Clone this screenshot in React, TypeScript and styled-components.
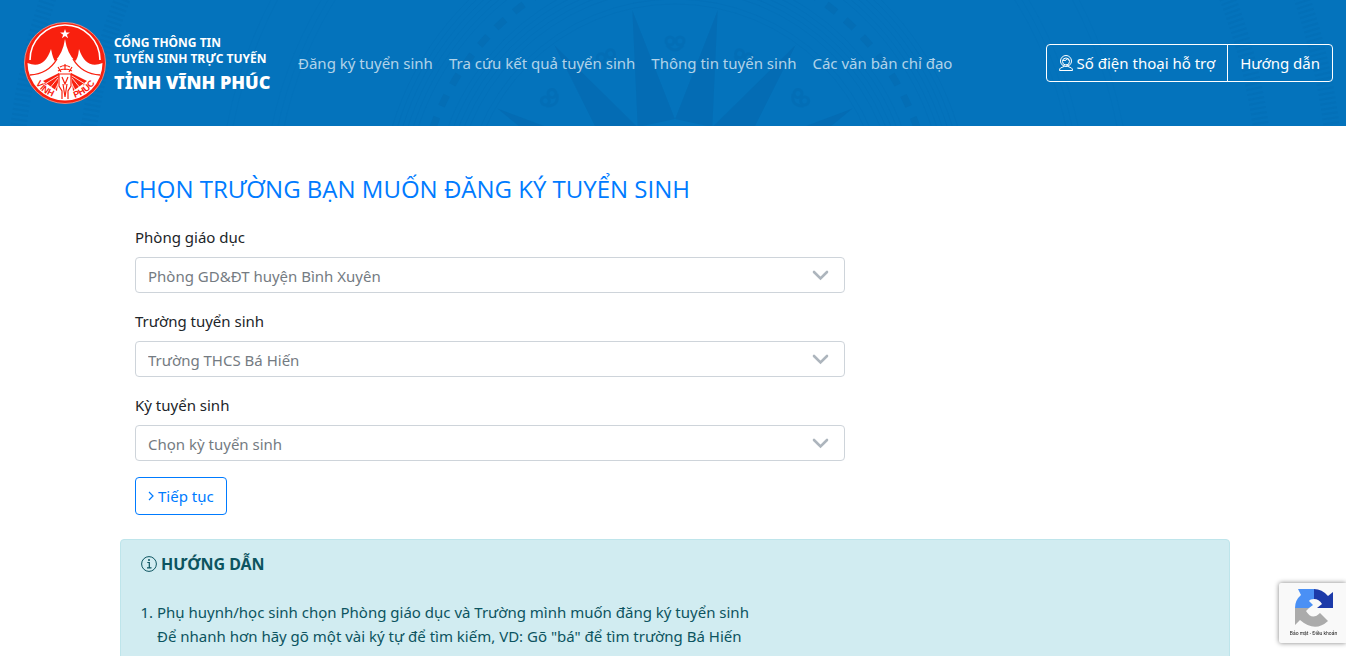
import React from "react";
import styled, { createGlobalStyle } from "styled-components";

const sans = `"Noto Sans", "Open Sans", sans-serif`;

const Global = createGlobalStyle`
  *, *::before, *::after { box-sizing: border-box; }
  body { margin: 0; background: #fff; color: #212529; font: 400 15px/24px ${sans}; }
`;

const Header = styled.header`
  position: relative;
  display: flex;
  align-items: center;
  height: 126px;
  padding: 0 13px 0 24px;
  background: #0473bc;
  overflow: hidden;
`;

const DrumPattern = styled.svg`
  position: absolute;
  inset: 0;
  width: 100%;
  height: 100%;
`;

const Brand = styled.a`
  position: relative;
  display: flex;
  align-items: center;
  gap: 8px;
  width: 266px;
  color: #fff;
  text-decoration: none;
  white-space: nowrap;
`;

const BrandText = styled.span`
  display: flex;
  flex-direction: column;
  padding-top: 6px;
  font-size: 12px;
  line-height: 16px;
  font-weight: 700;
`;

const Province = styled.strong`
  font-size: 18px;
  line-height: 30px;
`;

const Nav = styled.nav`
  position: relative;
  display: flex;
  flex: 1;
  white-space: nowrap;
`;

const NavLink = styled.a`
  padding: 8px;
  color: rgba(255, 255, 255, 0.7);
  text-decoration: none;
`;

const ButtonGroup = styled.div`
  position: relative;
  display: flex;
`;

const HeaderButton = styled.button`
  display: flex;
  align-items: center;
  gap: 4px;
  height: 38px;
  padding: 0 12px;
  border: 1px solid #fff;
  border-radius: 4px;
  background: transparent;
  color: #fff;
  font: inherit;
  white-space: nowrap;
  &:first-child { border-radius: 4px 0 0 4px; }
  &:last-child { margin-left: -1px; border-radius: 0 4px 4px 0; }
`;

const Main = styled.main`
  max-width: 1114px;
  margin: 0 auto;
  padding: 48px 0 0 4px;
`;

const Title = styled.h1`
  margin: 0;
  padding-left: 4px;
  color: #007bff;
  font: 500 24px/30px "Open Sans", "Noto Sans", sans-serif;
`;

const Form = styled.form`
  max-width: 740px;
  padding: 21px 15px 24px;
`;

const Field = styled.div`
  position: relative;
  margin-bottom: 16px;
`;

const Label = styled.label`
  display: block;
  margin-bottom: 8px;
`;

const Select = styled.select`
  display: block;
  width: 100%;
  height: 36px;
  padding: 2px 40px 0 12px;
  appearance: none;
  border: 1px solid #ced4da;
  border-radius: 4px;
  background: #fff;
  color: #747b82;
  font: inherit;
`;

const Chevron = styled.svg`
  position: absolute;
  right: 16px;
  bottom: 12px;
  pointer-events: none;
`;

const SubmitButton = styled.button`
  display: flex;
  align-items: center;
  gap: 3px;
  height: 38px;
  padding: 0 12px;
  border: 1px solid #007bff;
  border-radius: 4px;
  background: #fff;
  color: #007bff;
  font: inherit;
`;

const Guide = styled.section`
  padding: 12px 20px;
  border: 1px solid #bee5eb;
  border-radius: 4px;
  background: #d1ecf1;
  color: #0c5460;
`;

const GuideTitle = styled.h2`
  display: flex;
  align-items: center;
  gap: 4px;
  margin: 0 0 24px;
  font-size: 16px;
  line-height: 24px;
  font-weight: 700;
`;

const Steps = styled.ol`
  margin: 0;
  padding-left: 16px;
`;

const Captcha = styled.aside`
  position: fixed;
  right: 0;
  bottom: 13px;
  display: flex;
  flex-direction: column;
  align-items: center;
  width: 67px;
  height: 60px;
  padding: 5px 0 0 2px;
  border-radius: 2px 0 0 2px;
  background: #f9f9f9;
  box-shadow: 0 0 5px #808080;
`;

const CaptchaText = styled.small`
  color: #222;
  font: 400 5px/10px "Roboto", sans-serif;
  white-space: nowrap;
`;

const angles = (n: number) => Array.from({ length: n }, (_, i) => (i * 360) / n);

const Drum = () => (
  <DrumPattern viewBox="0 0 1346 126" preserveAspectRatio="xMidYMid slice" aria-hidden="true">
    <g fill="none" stroke="#03599b" transform="translate(675 211)">
      {angles(15).map((a) => (
        <path key={a} d="M-19-90L0-205L19-90Z" fill="#03599b" stroke="none" opacity=".24" transform={`rotate(${a + 12})`} />
      ))}
      {angles(15).map((a) => (
        <g key={a} transform={`rotate(${a}) translate(0 -170)`} opacity=".16" strokeWidth="3">
          <circle cx="-5" r="4" />
          <circle cx="5" r="4" />
          <path d="M-8 4Q0 14 8 4" />
        </g>
      ))}
      {[207, 212, 222, 227, 232, 237, 242, 270, 275, 280, 285, 290, 295].map((r) => (
        <circle key={r} r={r} opacity=".1" />
      ))}
      <circle r="256" strokeWidth="7" strokeDasharray="12 12" opacity=".2" />
      {[400, 406, 412, 450, 456].map((r) => <circle key={r} r={r} opacity=".06" />)}
      {[592, 662].map((r) => (
        <circle key={r} r={r} strokeWidth="16" strokeDasharray="2 3" opacity=".12" />
      ))}
    </g>
  </DrumPattern>
);

const Emblem = () => (
  <svg width="82" height="82" viewBox="0 0 82 82" aria-hidden="true">
    <defs><path id="rim" d="M11 61A36 36 0 0 0 71 61" /></defs>
    <circle cx="41" cy="41" r="40.5" fill="#f9200e" stroke="#e58a83" />
    <path d="M6 38A35 35 0 1 1 76 38" fill="none" stroke="#fff" strokeWidth="1.600" />
    <path d="M41 7l1.200 3.500h3.700l-3 2.200 1.200 3.600L41 14.100l-3.100 2.200 1.200-3.600-3-2.200h3.700Z" fill="#fff" />
    <path d="M3.500 41Q20 48 27 27Q29 37 31 39Q39 31 41 17Q43 31 51 39Q54 37 55 27Q62 48 78.500 41A37.500 37.500 0 0 1 3.500 41Z" fill="#fff" />
    <path d="M6 53Q24 52 33 37M76 53Q58 52 49 37" fill="none" stroke="#f9200e" strokeWidth="1.400" />
    <path d="M35 51L19 59L33 69ZM47 51L63 59L49 69Z" fill="#f9200e" />
    <path d="M34 54L21 62M34 56L25 67M35 60L30 70M48 54L61 62M48 56L57 67M47 60L52 70" stroke="#fff" strokeWidth=".8" />
    <g fill="none" stroke="#f9200e" strokeWidth="1.200">
      <path d="M41 42v6M36 45q5-3 10 0M34 49q7-4 14 0M34 45l3 5M48 45l-3 5M34 52h14M35 52v12l3 5v8M47 52v12l-3 5v8M38 55l3 7 3-7M39 62l2 13 2-13" />
    </g>
    <g fill="#f9200e" fontFamily="Liberation Sans" fontWeight="700" fontSize="9">
      <text><textPath href="#rim" startOffset="1">VĨNH</textPath></text>
      <text><textPath href="#rim" startOffset="45">PHÚC</textPath></text>
    </g>
  </svg>
);

const SupportIcon = () => (
  <svg width="14" height="16" viewBox="0 0 14 16" fill="none" stroke="currentColor" aria-hidden="true">
    <circle cx="7" cy="6" r="5.500" />
    <circle cx="7" cy="6.500" r="3.500" />
    <path d="M3.500 5.500Q8 6 8.500 3.500Q9 5 10.500 5.500M5 10v1.500L1.500 13Q.5 13.500.5 15.500h13Q13.500 13.500 12.500 13L9 11.500V10M7 10h2.500" />
  </svg>
);

const InfoIcon = () => (
  <svg width="16" height="16" viewBox="0 0 16 16" fill="none" stroke="currentColor" aria-hidden="true">
    <circle cx="8" cy="8" r="7.400" />
    <path d="M6.300 6.500H8.300v5M6 11.800h4.500" strokeWidth="1.200" />
    <circle cx="8" cy="4" r="1" fill="currentColor" stroke="none" />
  </svg>
);

const navItems = ["Đăng ký tuyển sinh", "Tra cứu kết quả tuyển sinh", "Thông tin tuyển sinh", "Các văn bản chỉ đạo"];

const fields = [
  { id: "office", label: "Phòng giáo dục", value: "Phòng GD&ĐT huyện Bình Xuyên" },
  { id: "school", label: "Trường tuyển sinh", value: "Trường THCS Bá Hiến" },
  { id: "term", label: "Kỳ tuyển sinh", value: "Chọn kỳ tuyển sinh" },
];

export default function App() {
  return (
    <>
      <Global />
      <Header>
        <Drum />
        <Brand href="#">
          <Emblem />
          <BrandText>
            <span>CỔNG THÔNG TIN</span>
            <span>TUYỂN SINH TRỰC TUYẾN</span>
            <Province>TỈNH VĨNH PHÚC</Province>
          </BrandText>
        </Brand>
        <Nav>
          {navItems.map((item) => <NavLink key={item} href="#">{item}</NavLink>)}
        </Nav>
        <ButtonGroup>
          <HeaderButton type="button"><SupportIcon />Số điện thoại hỗ trợ</HeaderButton>
          <HeaderButton type="button">Hướng dẫn</HeaderButton>
        </ButtonGroup>
      </Header>
      <Main>
        <Title>CHỌN TRƯỜNG BẠN MUỐN ĐĂNG KÝ TUYỂN SINH</Title>
        <Form>
          {fields.map(({ id, label, value }) => (
            <Field key={id}>
              <Label htmlFor={id}>{label}</Label>
              <Select id={id}><option>{value}</option></Select>
              <Chevron width="17" height="12" viewBox="0 0 17 12" fill="none" stroke="#adb5bd" strokeWidth="2.600" strokeLinecap="round" aria-hidden="true">
                <path d="M2 3l6.500 6.500L15 3" />
              </Chevron>
            </Field>
          ))}
          <SubmitButton type="button">
            <svg width="7" height="10" viewBox="0 0 7 10" fill="none" stroke="currentColor" strokeWidth="1.200" aria-hidden="true">
              <path d="M1 1l4 4-4 4" />
            </svg>
            Tiếp tục
          </SubmitButton>
        </Form>
        <Guide>
          <GuideTitle><InfoIcon />HƯỚNG DẪN</GuideTitle>
          <Steps>
            <li>
              Phụ huynh/học sinh chọn Phòng giáo dục và Trường mình muốn đăng ký tuyển sinh
              <br />
              Để nhanh hơn hãy gõ một vài ký tự để tìm kiếm, VD: Gõ "bá" để tìm trường Bá Hiến
            </li>
          </Steps>
        </Guide>
      </Main>
      <Captcha>
        <svg width="40" height="40" viewBox="0 0 40 40" aria-hidden="true">
          <path d="M20 1v10q-4 0-5 2l4 4-4 3H1Q1 12 7 7L4 1Z" fill="#4a90f5" />
          <path d="M20 1q8 0 14 7l5-4v16H23l5-4q-3-5-8-5Z" fill="#1c3aa9" />
          <path d="M1 20H15L12 23Q18 33 26 25L34 33Q21 45 6 32L1 37Z" fill="#ababab" />
        </svg>
        <CaptchaText>Bảo mật - Điều khoản</CaptchaText>
      </Captcha>
    </>
  );
}
